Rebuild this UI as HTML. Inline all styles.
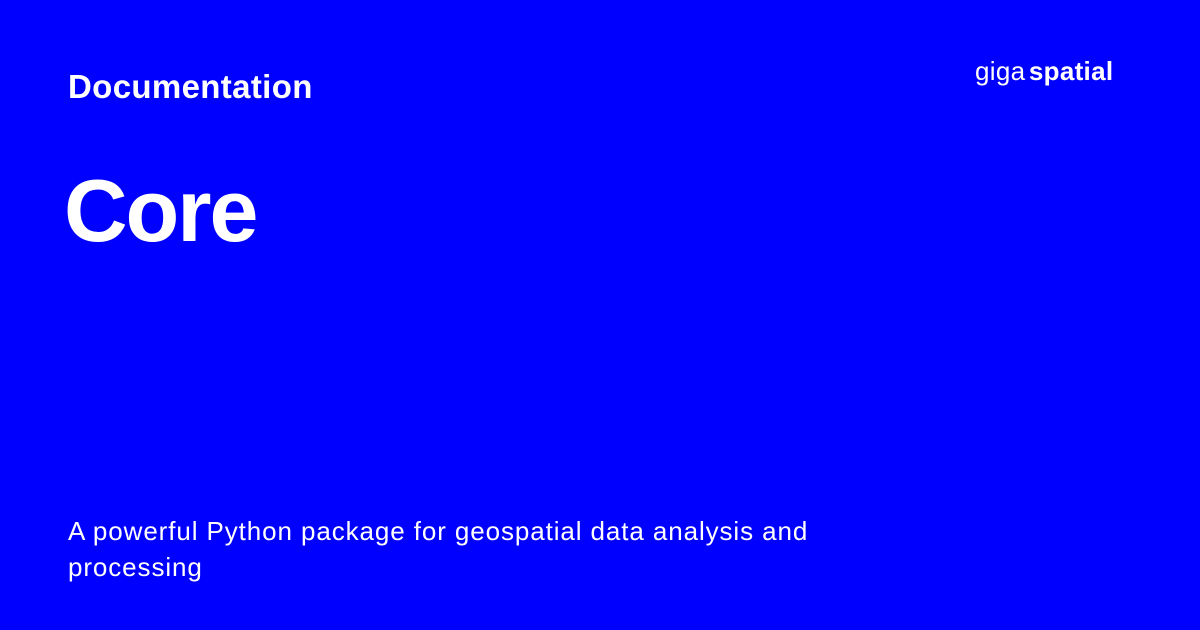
<!DOCTYPE html>
<html><head><style>
body{margin:0;width:1200px;height:630px;background:#0000fe;color:#fff;font-family:"Liberation Sans",sans-serif;position:relative;overflow:hidden}
div{position:absolute;white-space:nowrap}
</style></head><body>
<div style="left:68px;top:68px;font-size:33px;font-weight:bold;letter-spacing:0.35px">Documentation</div>
<div style="left:64px;top:160px;font-size:88px;font-weight:bold;letter-spacing:-2px">Core</div>
<div style="left:975px;top:56px;font-size:26px;letter-spacing:0.3px"><span style="font-weight:normal">giga</span> <span style="font-weight:bold;margin-left:-4px">spatial</span></div>
<div style="left:68px;top:513px;font-size:26px;line-height:36px;letter-spacing:0.9px;white-space:normal;width:800px">A powerful Python package for geospatial data analysis and processing</div>
</body></html>
